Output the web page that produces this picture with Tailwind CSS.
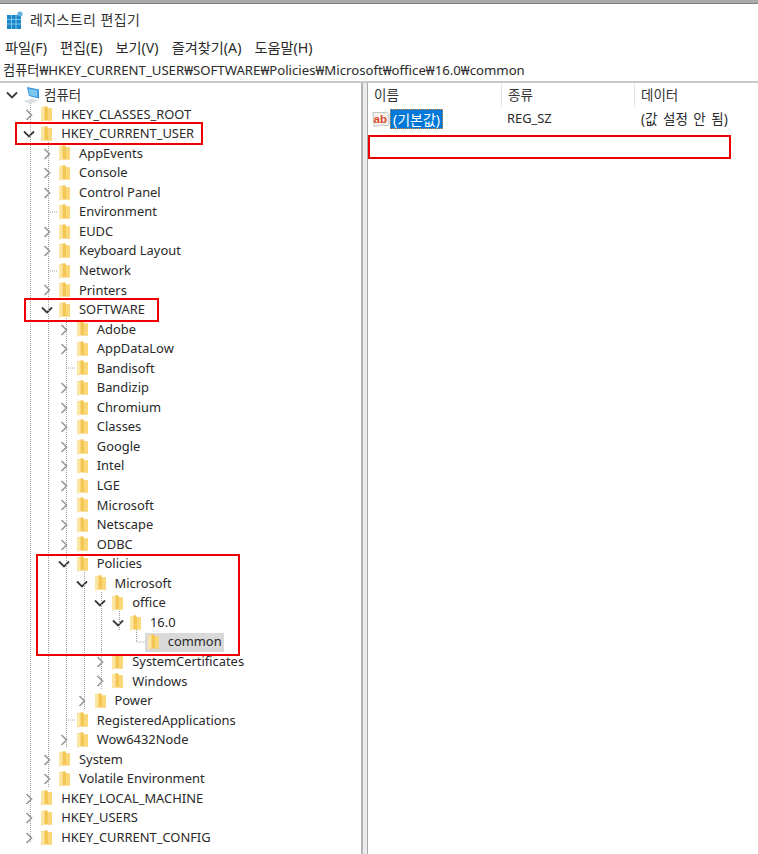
<!DOCTYPE html>
<html lang="ko">
<head>
    <meta charset="UTF-8" />
    <title>레지스트리 편집기</title>
    <script src="https://cdn.jsdelivr.net/npm/@tailwindcss/browser@4"></script>
</head>
<body class="bg-white">
    <svg class="hidden">
        <symbol id="folder" viewBox="0 0 11 16">
            <path d="M0 1.5L6 0 7 2.5H11V14.5H0z" fill="#f4c654"/>
            <path d="M7 2.5H11V14.5H7z" fill="#fad877"/>
            <path d="M0 1.5L3.5 1V14L0 16z" fill="#fde6a4"/>
        </symbol>
        <symbol id="chevron-right" viewBox="0 0 8 12">
            <path d="M1.5 1l5 5-5 5" fill="none" stroke="#9a9a9a" stroke-width="1.7"/>
        </symbol>
        <symbol id="chevron-down" viewBox="0 0 12 8">
            <path d="M1 1.5l5 5 5-5" fill="none" stroke="#3a3a3a" stroke-width="1.8"/>
        </symbol>
    </svg>

    <div class="relative w-[758px] h-[854px] overflow-hidden flex flex-col text-[12.9px] text-[#2a2a2a] font-['Noto_Sans','Noto_Sans_CJK_KR',sans-serif]">
        <div class="h-[4px] bg-[#a9a9a9] border-b border-[#7d7d7d]"></div>

        <!-- title bar -->
        <div class="h-[31px] flex items-center pl-[7px] gap-[7px]">
            <svg width="16" height="18" viewBox="0 0 16 18">
                <rect x="0" y="4" width="14" height="14" fill="#1a86c8"/>
                <path d="M0 8.5h14M0 13h14M4.5 4v14M9 4v14" stroke="#7cc4ec" stroke-width="1"/>
                <circle cx="13" cy="3" r="2.6" fill="#5fb4e0"/>
            </svg>
            <span class="text-[14px] text-[#333] tracking-[0.4px]">레지스트리 편집기</span>
        </div>

        <!-- menu -->
        <div class="h-[25px] flex items-center pl-[5px] gap-[13px] text-[14.2px]">
            <span>파일(F)</span>
            <span>편집(E)</span>
            <span>보기(V)</span>
            <span>즐겨찾기(A)</span>
            <span>도움말(H)</span>
        </div>

        <!-- address bar -->
        <div class="h-[23px] flex items-center pl-[3px] border-b-2 border-[#c8c8c8] text-[13.2px] whitespace-nowrap">컴퓨터₩HKEY_CURRENT_USER₩SOFTWARE₩Policies₩Microsoft₩office₩16.0₩common</div>

        <div class="flex flex-1 min-h-0">
            <!-- tree -->
            <div id="tree" class="w-[361px] pt-[2px] shrink-0"></div>

            <!-- splitter -->
            <div class="w-[7px] shrink-0 bg-[#ececec] border-l-2 border-r border-l-[#b4b4b8] border-r-[#a8a8a8]"></div>

            <!-- values -->
            <div class="flex-1">
                <div class="flex h-[24px] items-center text-[#333] text-[13.5px]">
                    <div class="w-[134px] pl-[6px] border-r border-[#e5e5e5] h-full flex items-center">이름</div>
                    <div class="w-[133px] pl-[6px] border-r border-[#e5e5e5] h-full flex items-center">종류</div>
                    <div class="pl-[6px]">데이터</div>
                </div>
                <div class="flex h-[22px] mt-[1px] items-center">
                    <div class="w-[135px] pl-[4px] flex items-center">
                        <svg width="18" height="18" viewBox="0 0 18 18">
                            <path d="M1 2.5h14l2 2v10l-2 1.5-5-1-8 1.5z" fill="#f6f2ee" stroke="#c4c4c4"/>
                            <text x="1.5" y="12.5" font-size="11.5" font-weight="700" fill="#dc4a2c" font-family="Liberation Sans, sans-serif">ab</text>
                        </svg>
                        <span class="bg-[#0078d7] text-white text-[14px] h-[20px] w-[53px] flex items-center justify-center outline-1 outline-dotted outline-[#e08b3e] -outline-offset-1">(기본값)</span>
                    </div>
                    <div class="w-[133px] pl-[4px]">REG_SZ</div>
                    <div class="pl-[5px] text-[13.5px] [word-spacing:2px] whitespace-nowrap">(값 설정 안 됨)</div>
                </div>
            </div>
        </div>

        <!-- tree guides -->
        <svg class="absolute left-0 top-0 pointer-events-none" width="360" height="854" fill="none" stroke="#a0a0a0" stroke-dasharray="1 1">
            <path d="M30.5 103V842"/>
            <path d="M48.5 142V788"/>
            <path d="M66.5 318V748"/>
            <path d="M84.5 572V709"/>
            <path d="M101.5 592V690"/>
            <path d="M119.5 611V631"/>
            <path d="M136.5 630V642H145"/>
            <path d="M48 212H58M48 271H58M66 368H76M66 720H76"/>
        </svg>

        <!-- annotation boxes -->
        <div class="absolute left-[15px] top-[122px] w-[188px] h-[23px] border-2 border-[#ee0000]"></div>
        <div class="absolute left-[24px] top-[298px] w-[135px] h-[24px] border-2 border-[#ee0000]"></div>
        <div class="absolute left-[36px] top-[554px] w-[204px] h-[102px] border-2 border-[#ee0000]"></div>
        <div class="absolute left-[368px] top-[135px] w-[363px] h-[24px] border-2 border-[#ee0000]"></div>
    </div>

    <script>
        // [label, depth, state] state: c = collapsed, o = open, l = leaf, s = selected
        const rows = [
            ['HKEY_CLASSES_ROOT', 1, 'c'], ['HKEY_CURRENT_USER', 1, 'o'],
            ['AppEvents', 2, 'c'], ['Console', 2, 'c'], ['Control Panel', 2, 'c'],
            ['Environment', 2, 'l'], ['EUDC', 2, 'c'], ['Keyboard Layout', 2, 'c'],
            ['Network', 2, 'l'], ['Printers', 2, 'c'], ['SOFTWARE', 2, 'o'],
            ['Adobe', 3, 'c'], ['AppDataLow', 3, 'c'], ['Bandisoft', 3, 'l'],
            ['Bandizip', 3, 'c'], ['Chromium', 3, 'c'], ['Classes', 3, 'c'],
            ['Google', 3, 'c'], ['Intel', 3, 'c'], ['LGE', 3, 'c'],
            ['Microsoft', 3, 'c'], ['Netscape', 3, 'c'], ['ODBC', 3, 'c'],
            ['Policies', 3, 'o'], ['Microsoft', 4, 'o'], ['office', 5, 'o'],
            ['16.0', 6, 'o'], ['common', 7, 's'],
            ['SystemCertificates', 5, 'c'], ['Windows', 5, 'c'], ['Power', 4, 'c'],
            ['RegisteredApplications', 3, 'l'], ['Wow6432Node', 3, 'c'],
            ['System', 2, 'c'], ['Volatile Environment', 2, 'c'],
            ['HKEY_LOCAL_MACHINE', 1, 'c'], ['HKEY_USERS', 1, 'c'], ['HKEY_CURRENT_CONFIG', 1, 'c']
        ];

        const tree = document.getElementById('tree');
        let html = `
            <div class="h-[19.55px] flex items-center pl-[6px]">
                <svg width="12" height="8"><use href="#chevron-down"/></svg>
                <svg class="ml-[3px]" width="20" height="18" viewBox="0 0 20 18">
                    <path d="M2 15.5l9-3 7 2-8 3z" fill="#dcdfe3"/>
                    <path d="M6 1l12 2.5v9L8 10z" fill="#2f93dc"/>
                    <path d="M7.5 2.5l9 2v6.5l-8-1.8z" fill="#7cc6f2"/>
                </svg>
                <span class="ml-[3px] text-[#333] text-[13.5px]">컴퓨터</span>
            </div>`;

        rows.forEach(([label, depth, state]) => {
            const chevron = state === 'o'
                ? '<svg class="absolute left-[-3px] top-[6px]" width="12" height="8"><use href="#chevron-down"/></svg>'
                : state === 'c'
                    ? '<svg class="absolute left-[-1px] top-[4px]" width="8" height="12"><use href="#chevron-right"/></svg>'
                    : '';
            const x = 8.5 + depth * 17.75;
            const folder = '<svg class="shrink-0" width="11" height="16"><use href="#folder"/></svg>';
            const content = state === 's'
                ? `<span class="bg-[#d9d9d9] h-[19px] flex items-center pl-[3px] pr-[2px] -ml-[3px]">${folder}<span class="pl-[9px]">${label}</span></span>`
                : `${folder}<span class="pl-[9px]">${label}</span>`;
            html += `
                <div class="relative h-[19.55px] flex items-center" style="padding-left:${x + 15}px">
                    <span class="absolute" style="left:${x - 0.5}px;top:0;width:12px;height:19px">${chevron}</span>
                    ${content}
                </div>`;
        });
        tree.innerHTML = html;
    </script>
</body>
</html>
